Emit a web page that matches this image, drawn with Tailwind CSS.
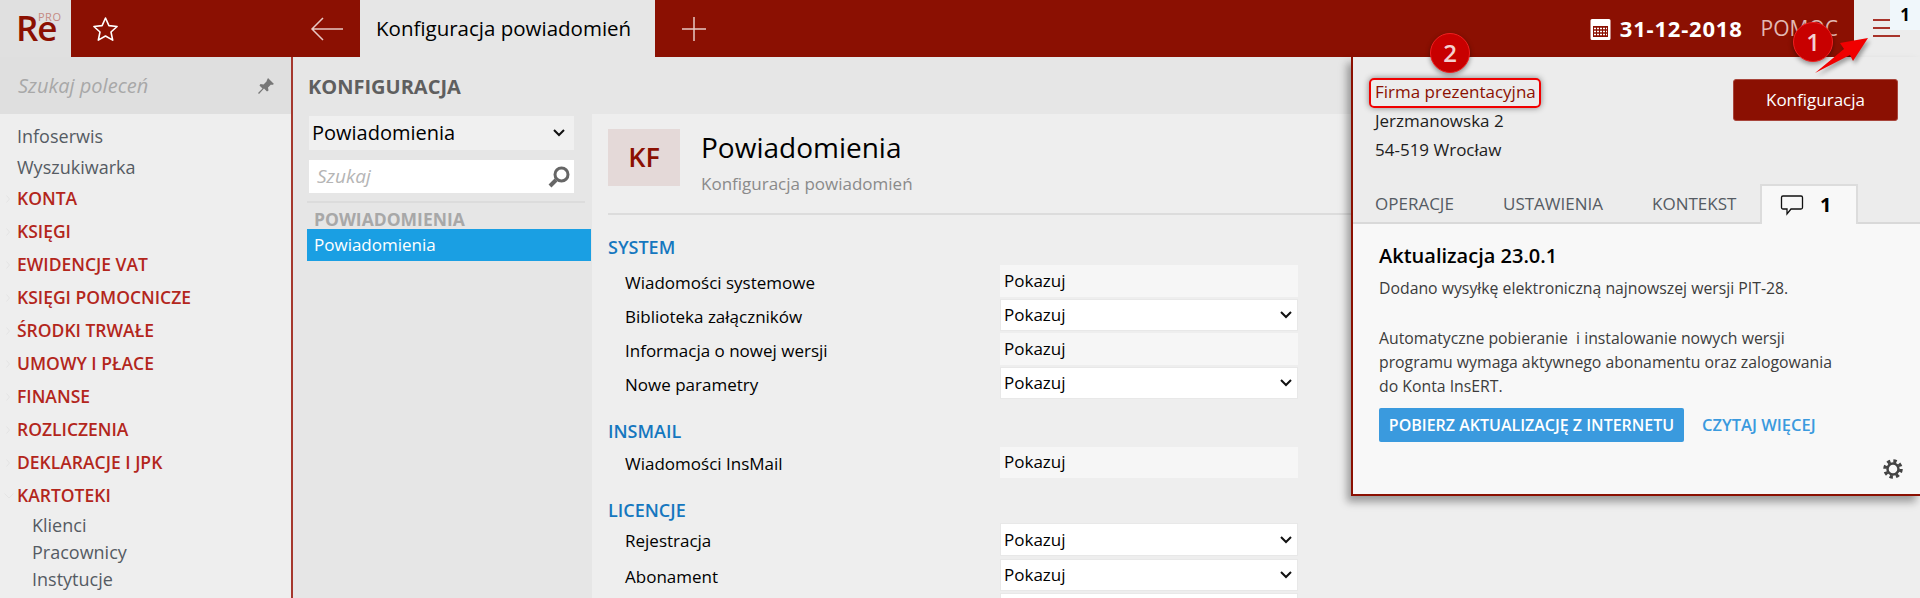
<!DOCTYPE html>
<html lang="pl">
<head>
    <meta charset="UTF-8">
    <title>Konfiguracja powiadomień</title>
    <script src="https://cdn.jsdelivr.net/npm/@tailwindcss/browser@4"></script>
</head>
<body class="bg-[#e6e6e6] font-['Open_Sans',sans-serif]">
<div class="relative w-[1920px] h-[598px] overflow-hidden">

    <!-- Top bar -->
    <header class="flex h-[57px] bg-[#8b1002]">
        <div class="relative w-[71px] bg-[#e0e0e0]">
            <span class="absolute left-[16px] top-[7px] text-[35px] leading-[42px] font-semibold tracking-[-1px] text-[#8b1002]">Re</span>
            <span class="absolute left-[38px] top-[11px] text-[11px] leading-[12px] tracking-[0.5px] text-[#c58a84]">PRO</span>
        </div>
        <div class="w-[289px] flex items-center">
            <svg class="ml-[21px]" width="27" height="26" viewBox="0 0 27 26" fill="none" stroke="#fff" stroke-width="1.6" stroke-linejoin="round"><path d="M13.5 2l3.4 7.6 8.2.9-6.1 5.5 1.7 8.1-7.2-4.1-7.2 4.1 1.7-8.1L1.9 10.500l8.200-.9z"/></svg>
            <svg class="ml-[191px]" width="34" height="26" viewBox="0 0 34 26" fill="none" stroke="#e8c8c4" stroke-width="1.5"><path d="M33 13H2M13 2L2 13l11 11"/></svg>
        </div>
        <div class="w-[295px] bg-[#e6e6e6] flex items-center pl-[16px] text-[20.500px] font-medium text-black">Konfiguracja powiadomień</div>
        <div class="flex-1 flex items-center">
            <svg class="ml-[26px]" width="26" height="26" viewBox="0 0 26 26" stroke="#e8c8c4" stroke-width="1.5"><path d="M13 1v24M1 13h24"/></svg>
            <svg class="ml-auto" width="21" height="22" viewBox="0 0 21 22"><path fill="#fff" fill-rule="evenodd" d="M2 1h17a1.500 1.500 0 0 1 1.500 1.500v18A1.500 1.500 0 0 1 19 22H2a1.500 1.500 0 0 1-1.500-1.500v-18A1.500 1.500 0 0 1 2 1zM3 8v11h15V8z"/><path stroke="#fff" stroke-width="1.500" stroke-dasharray="2 1" d="M4 10.500h13M4 13.500h13M4 16.500h13"/></svg>
            <span class="ml-[9px] text-[22px] font-bold tracking-[0.8px] text-white">31-12-2018</span>
            <span class="ml-[18px] mr-[16px] text-[21px] text-[#e2b9b4]">POMOC</span>
        </div>
        <div class="relative w-[66px] bg-[#ececec]">
            <div class="absolute left-[19px] top-[19px] w-[27px] flex flex-col gap-[6px]">
                <div class="h-[2px] w-[18px] bg-[#a8332a]"></div>
                <div class="h-[2px] w-[18px] bg-[#a8332a]"></div>
                <div class="h-[2px] bg-[#a8332a]"></div>
            </div>
            <div class="absolute right-0 top-0 w-[30px] h-[30px] bg-[#f0f7fb] text-center text-[17px] leading-[30px] font-bold text-black">1</div>
        </div>
    </header>

    <div class="flex h-[541px]">
        <!-- Sidebar -->
        <aside class="w-[293px] shrink-0 bg-[#eeeeee] border-r-2 border-[#a5382e]">
            <div class="flex items-center h-[57px] bg-[#dfdfdf] pl-[18px] pr-[16px]">
                <span class="flex-1 text-[20px] italic text-[#a8a8a8]">Szukaj poleceń</span>
                <svg width="18" height="18" viewBox="0 0 18 18" fill="#777"><path d="M11 1l6 6-2 1-1-.500-3 3 .5 3-1.500 1-3-3L2 17l-1-1 4.500-4.500-3-3 1-1.500 3 .5 3-3L10 3z"/></svg>
            </div>
            <nav class="pt-[7px] pl-[6px] text-[18px]">
                <div class="pl-[11px] h-[31px] leading-[31px] text-[#555b63]">Infoserwis</div>
                <div class="pl-[11px] h-[30px] leading-[31px] text-[#555b63]">Wyszukiwarka</div>
                <div class="flex items-center gap-[7px] h-[33px] font-semibold text-[#b3261c] text-[17.500px]"><svg width="4" height="8" viewBox="0 0 4 8" fill="none" stroke="#e4e4e4"><path d="M.5.500l3 3.500-3 3.500"/></svg>KONTA</div>
                <div class="flex items-center gap-[7px] h-[33px] font-semibold text-[#b3261c] text-[17.500px]"><svg width="4" height="8" viewBox="0 0 4 8" fill="none" stroke="#e4e4e4"><path d="M.5.500l3 3.500-3 3.500"/></svg>KSIĘGI</div>
                <div class="flex items-center gap-[7px] h-[33px] font-semibold text-[#b3261c] text-[17.500px]"><svg width="4" height="8" viewBox="0 0 4 8" fill="none" stroke="#e4e4e4"><path d="M.5.500l3 3.500-3 3.500"/></svg>EWIDENCJE VAT</div>
                <div class="flex items-center gap-[7px] h-[33px] font-semibold text-[#b3261c] text-[17.500px]"><svg width="4" height="8" viewBox="0 0 4 8" fill="none" stroke="#e4e4e4"><path d="M.5.500l3 3.500-3 3.500"/></svg>KSIĘGI POMOCNICZE</div>
                <div class="flex items-center gap-[7px] h-[33px] font-semibold text-[#b3261c] text-[17.500px]"><svg width="4" height="8" viewBox="0 0 4 8" fill="none" stroke="#e4e4e4"><path d="M.5.500l3 3.500-3 3.500"/></svg>ŚRODKI TRWAŁE</div>
                <div class="flex items-center gap-[7px] h-[33px] font-semibold text-[#b3261c] text-[17.500px]"><svg width="4" height="8" viewBox="0 0 4 8" fill="none" stroke="#e4e4e4"><path d="M.5.500l3 3.500-3 3.500"/></svg>UMOWY I PŁACE</div>
                <div class="flex items-center gap-[7px] h-[33px] font-semibold text-[#b3261c] text-[17.500px]"><svg width="4" height="8" viewBox="0 0 4 8" fill="none" stroke="#e4e4e4"><path d="M.5.500l3 3.500-3 3.500"/></svg>FINANSE</div>
                <div class="flex items-center gap-[7px] h-[33px] font-semibold text-[#b3261c] text-[17.500px]"><svg width="4" height="8" viewBox="0 0 4 8" fill="none" stroke="#e4e4e4"><path d="M.5.500l3 3.500-3 3.500"/></svg>ROZLICZENIA</div>
                <div class="flex items-center gap-[7px] h-[33px] font-semibold text-[#b3261c] text-[17.500px]"><svg width="4" height="8" viewBox="0 0 4 8" fill="none" stroke="#e4e4e4"><path d="M.5.500l3 3.500-3 3.500"/></svg>DEKLARACJE I JPK</div>
                <div class="flex items-center gap-[3px] -ml-[2px] h-[33px] font-semibold text-[#b3261c] text-[17.500px]"><svg width="10" height="6" viewBox="0 0 10 6" fill="none" stroke="#e4e4e4"><path d="M.5.500l4.500 4.500 4.500-4.500"/></svg>KARTOTEKI</div>
                <div class="pl-[26px] h-[27px] leading-[27px] text-[#555b63]">Klienci</div>
                <div class="pl-[26px] h-[27px] leading-[27px] text-[#555b63]">Pracownicy</div>
                <div class="pl-[26px] h-[27px] leading-[27px] text-[#555b63]">Instytucje</div>
            </nav>
        </aside>

        <!-- Main -->
        <main class="flex-1 min-w-0">
            <div class="h-[57px] pl-[15px] pt-[2px] flex items-center text-[20px] font-bold text-[#5f5f5f]">KONFIGURACJA</div>
            <div class="flex">
                <div class="w-[299px] shrink-0 pl-[14px]">
                    <div class="ml-[2px] w-[265px] h-[34px] mt-[2px] bg-[#f0f0f0] flex items-center justify-between pl-[3px] pr-[9px] text-[20px] font-medium text-black">
                        Powiadomienia
                        <svg width="12" height="8" viewBox="0 0 12 8" fill="none" stroke="#111" stroke-width="2"><path d="M1 1l5 5 5-5"/></svg>
                    </div>
                    <div class="ml-[2px] w-[265px] h-[33px] mt-[10px] bg-white flex items-center justify-between pl-[8px] pr-[3px] text-[19px] italic text-[#b5b5b5]">
                        Szukaj
                        <svg width="24" height="24" viewBox="0 0 24 24" fill="none" stroke="#666"><circle cx="14.500" cy="9.500" r="6.500" stroke-width="3"/><path d="M9 15l-6 6" stroke-width="4"/></svg>
                    </div>
                    <div class="mt-[8px] w-[278px] border-t-2 border-[#dcdcdc]"></div>
                    <div class="pl-[7px] mt-[6px] h-[20px] leading-[20px] text-[17.500px] font-bold text-[#a8a8a8]">POWIADOMIENIA</div>
                    <div class="h-[32px] w-[284px] bg-[#1a9fe3] pl-[7px] leading-[32px] text-[17px] text-white">Powiadomienia</div>
                </div>

                <div class="flex-1 bg-[#eeeeee] h-[484px] pl-[16px]">
                    <div class="flex h-[101px] pt-[15px] border-b-2 border-[#dcdcdc]">
                        <div class="w-[72px] h-[57px] bg-[#e4d9d8] flex items-center justify-center text-[27px] font-semibold text-[#8b1002]">KF</div>
                        <div class="ml-[21px]">
                            <div class="text-[28px] leading-[36px] text-black">Powiadomienia</div>
                            <div class="mt-[6px] text-[17px] text-[#8a8a8a]">Konfiguracja powiadomień</div>
                        </div>
                    </div>
                    <div class="w-[690px]">
                        <div class="h-[24px] mt-[20px] mb-[6px] leading-[24px] font-semibold text-[18px] text-[#1577bf]">SYSTEM</div>
                        <div class="flex items-center h-[32px] mb-[2px] text-[17px]"><span class="w-[392px] pl-[17px] pt-[3px]">Wiadomości systemowe</span><div class="w-[298px] h-full bg-[#f6f6f6] px-[4px] leading-[31px]">Pokazuj</div></div>
                        <div class="flex items-center h-[32px] mb-[2px] text-[17px]"><span class="w-[392px] pl-[17px] pt-[3px]">Biblioteka załączników</span><div class="w-[298px] h-full bg-white border border-[#e8e8e8] px-[3px] flex items-center justify-between">Pokazuj<svg width="12" height="8" viewBox="0 0 12 8" fill="none" stroke="#111" stroke-width="2" class="mr-[2px]"><path d="M1 1l5 5 5-5"/></svg></div></div>
                        <div class="flex items-center h-[32px] mb-[2px] text-[17px]"><span class="w-[392px] pl-[17px] pt-[3px]">Informacja o nowej wersji</span><div class="w-[298px] h-full bg-[#f6f6f6] px-[4px] leading-[31px]">Pokazuj</div></div>
                        <div class="flex items-center h-[32px] mb-[2px] text-[17px]"><span class="w-[392px] pl-[17px] pt-[3px]">Nowe parametry</span><div class="w-[298px] h-full bg-white border border-[#e8e8e8] px-[3px] flex items-center justify-between">Pokazuj<svg width="12" height="8" viewBox="0 0 12 8" fill="none" stroke="#111" stroke-width="2" class="mr-[2px]"><path d="M1 1l5 5 5-5"/></svg></div></div>
                        <div class="h-[33px] mt-[15px] leading-[35px] font-semibold text-[18px] text-[#1577bf]">INSMAIL</div>
                        <div class="flex items-center h-[31px] mb-[2px] text-[17px]"><span class="w-[392px] pl-[17px] pt-[3px]">Wiadomości InsMail</span><div class="w-[298px] h-full bg-[#f6f6f6] px-[4px] leading-[30px]">Pokazuj</div></div>
                        <div class="h-[33px] mt-[12px] leading-[40px] font-semibold text-[18px] text-[#1577bf]">LICENCJE</div>
                        <div class="flex items-center h-[33px] mb-[3px] text-[17px]"><span class="w-[392px] pl-[17px] pt-[3px]">Rejestracja</span><div class="w-[298px] h-full bg-white border border-[#e8e8e8] px-[3px] flex items-center justify-between">Pokazuj<svg width="12" height="8" viewBox="0 0 12 8" fill="none" stroke="#111" stroke-width="2" class="mr-[2px]"><path d="M1 1l5 5 5-5"/></svg></div></div>
                        <div class="flex items-center h-[32px] mb-[2px] text-[17px]"><span class="w-[392px] pl-[17px] pt-[3px]">Abonament</span><div class="w-[298px] h-full bg-white border border-[#e8e8e8] px-[3px] flex items-center justify-between">Pokazuj<svg width="12" height="8" viewBox="0 0 12 8" fill="none" stroke="#111" stroke-width="2" class="mr-[2px]"><path d="M1 1l5 5 5-5"/></svg></div></div>
                        <div class="h-[32px] ml-[392px] w-[298px] bg-white border border-[#e8e8e8]"></div>
                    </div>
                </div>
            </div>
        </main>
    </div>

    <!-- Popover -->
    <div class="absolute right-0 top-[57px] w-[569px] h-[439px] border-l-2 border-b-2 border-[#8b1002] bg-[#ececec] shadow-[-4px_6px_8px_rgba(0,0,0,0.35)] flex flex-col">
        <div class="flex h-[148px] justify-between pl-[22px] pr-[22px]">
            <div class="pt-[20px] text-[17px] text-[#1d1d1d]">
                <div class="h-[29px] leading-[29px] text-[#8b1002]">Firma prezentacyjna</div>
                <div class="h-[29px] leading-[29px]">Jerzmanowska 2</div>
                <div class="h-[29px] leading-[29px]">54-519 Wrocław</div>
            </div>
            <div class="mt-[22px] w-[165px] h-[42px] rounded-[3px] bg-[#8b1002] border border-[#a8453b] flex items-center justify-center text-[17px] text-white">Konfiguracja</div>
        </div>
        <div class="flex h-[19px] border-b-2 border-[#d9d9d9] relative">
        </div>
        <div class="flex-1 bg-[#f8f8f8] pl-[26px] pt-[19px] relative">
            <div class="text-[20px] leading-[26px] font-semibold text-black">Aktualizacja 23.0.1</div>
            <div class="mt-[7px] text-[15.800px] leading-[24px] text-[#3c3c3c]">Dodano wysyłkę elektroniczną najnowszej wersji PIT-28.</div>
            <div class="mt-[26px] text-[15.800px] leading-[24px] text-[#3c3c3c]">Automatyczne pobieranie&nbsp; i instalowanie nowych wersji<br>programu wymaga aktywnego abonamentu oraz zalogowania<br>do Konta InsERT.</div>
            <div class="mt-[10px] flex items-center">
                <div class="w-[305px] h-[34px] rounded-[2px] bg-[#3a9ade] flex items-center justify-center text-[16px] font-semibold text-white">POBIERZ AKTUALIZACJĘ Z INTERNETU</div>
                <div class="ml-[18px] text-[16.500px] font-semibold text-[#3a9ade]">CZYTAJ WIĘCEJ</div>
            </div>
            <svg class="absolute right-[16px] bottom-[14px]" width="22" height="22" viewBox="0 0 22 22" fill="none" stroke="#444"><circle cx="11" cy="11" r="5.500" stroke-width="2.500"/><circle cx="11" cy="11" r="8" stroke-width="3.500" stroke-dasharray="3.300 3"/></svg>
        </div>
        <!-- Tabs overlap the line above the content -->
        <div class="absolute left-[22px] top-[94px] h-[73px] flex items-end">
            <div class="flex items-center h-[40px] text-[17px] text-[#555b63]">
                <span class="w-[128px]">OPERACJE</span>
                <span class="w-[149px]">USTAWIENIA</span>
                <span class="w-[108px]">KONTEKST</span>
            </div>
            <div class="flex items-center w-[98px] h-[40px] bg-[#f8f8f8] border-2 border-b-0 border-[#dcdcdc] pl-[17px]">
                <svg width="26" height="22" viewBox="0 0 24 22" fill="none" stroke="#111" stroke-width="1.300"><path d="M3 2h18a1.500 1.500 0 0 1 1.500 1.500v10A1.500 1.500 0 0 1 21 15H11l-4 5v-5H3a1.500 1.500 0 0 1-1.500-1.500v-10A1.500 1.500 0 0 1 3 2z"/></svg>
                <span class="ml-[15px] text-[20px] font-bold text-black">1</span>
            </div>
        </div>
    </div>

    <!-- Annotations -->
    <div class="absolute left-[1369px] top-[78px] w-[172px] h-[30px] rounded-[5px] border-2 border-[#f00000] shadow-[0_0_6px_rgba(0,0,0,0.45)]"></div>
    <div class="absolute left-[1430px] top-[33px] w-[40px] h-[40px] rounded-full bg-[#c80000] border border-[#f02020] shadow-[0_2px_5px_rgba(0,0,0,0.4)] text-center text-[24px] leading-[38px] font-semibold text-[#f3d0d0]">2</div>
    <div class="absolute left-[1793px] top-[22px] w-[40px] h-[40px] rounded-full bg-[#c80000] border border-[#f02020] shadow-[0_2px_5px_rgba(0,0,0,0.4)] text-center text-[24px] leading-[38px] font-semibold text-[#f3d0d0]">1</div>
    <svg class="absolute left-[1810px] top-[34px] drop-shadow-[2px_3px_2px_rgba(0,0,0,0.35)]" width="62" height="44" viewBox="0 0 62 44"><path fill="#f00000" d="M58 4L43 27l-3-6L5 39 34 15l-4-6z"/></svg>
</div>
</body>
</html>
